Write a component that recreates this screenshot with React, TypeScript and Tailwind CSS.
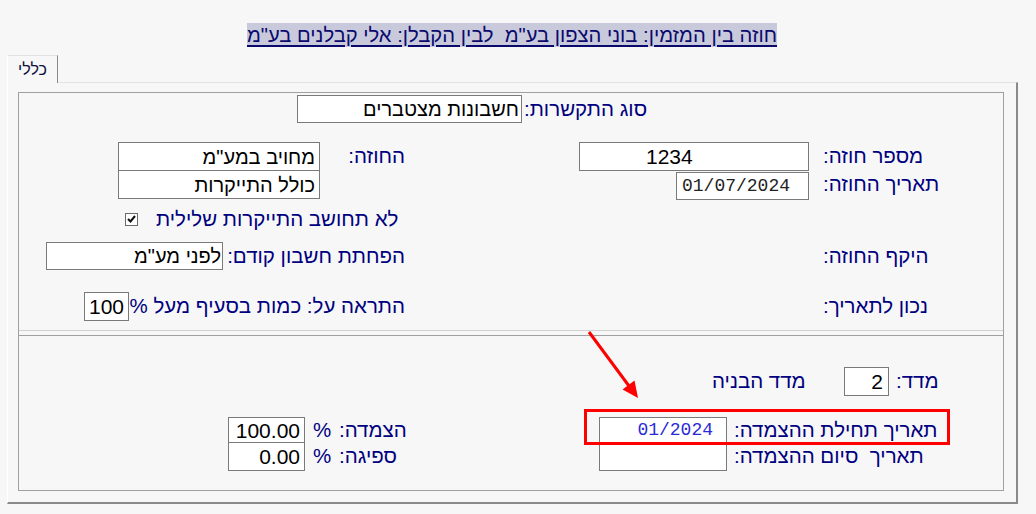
import React from "react";

const LBL = "text-[#000080] text-[20.5px] leading-none whitespace-nowrap";

function Box({ className, children }: { className: string; children?: React.ReactNode }) {
  return (
    <div className={"bg-white border border-[#7a7a7a] flex items-center overflow-hidden shrink-0 " + className}>
      {children}
    </div>
  );
}

function Lbl({ children, className = "" }: { children: React.ReactNode; className?: string }) {
  return (
    <span dir="rtl" className={LBL + " shrink-0 " + className}>
      {children}
    </span>
  );
}

export default function App() {
  return (
    <div className="w-[1036px] h-[514px] bg-[#f7f7f7] overflow-hidden font-['Liberation_Sans',Arial,sans-serif]">
      {/* Title */}
      <div className="flex justify-center w-[1024px] pt-[23px] h-[55px]">
        <span
          dir="rtl"
          className="bg-[#c9c9dc] text-[#0a0a6e] text-[20.2px] leading-[24px] h-[24px] underline underline-offset-[3px] whitespace-pre"
        >
          חוזה בין המזמין: בוני הצפון בע"מ  לבין הקבלן: אלי קבלנים בע"מ
        </span>
      </div>

      {/* Tab strip */}
      <div className="flex pl-[7px] h-[27px]">
        <div className="w-[51px] h-[28px] border-l border-t border-r border-l-[#ffffff] border-t-[#e0e0e0] border-r-[#8a8a8a] bg-[#f7f7f7] flex justify-center pt-[6px] relative z-10">
          <span dir="rtl" className="text-[16px] leading-none text-[#101040]">
            כללי
          </span>
        </div>
      </div>

      {/* Panel */}
      <div className="ml-[7px] w-[1011px] h-[422px] border-t border-l border-t-[#e3e3e3] border-l-[#ffffff] border-r-2 border-b-2 border-r-[#8a8a8a] border-b-[#8a8a8a] pt-[9px] pl-[10px]">
        <div className="relative w-[986px] h-[399px] border border-[#a0a0a0] flex flex-col">
          {/* Row A */}
          <div className="flex items-center h-[28px] mt-[2px]">
            <Box className="ml-[278px] w-[225px] h-[28px] justify-end pr-[2px]">
              <span dir="rtl" className="text-[20px] leading-none text-black">חשבונות מצטברים</span>
            </Box>
            <Lbl className="ml-[2px]">סוג התקשרות:</Lbl>
          </div>

          {/* Row B */}
          <div className="flex items-center h-[29px] mt-[19px]">
            <Box className="ml-[99px] w-[202px] h-[29px] justify-end pr-[4px]">
              <span dir="rtl" className="text-[20px] leading-none text-black">מחויב במע"מ</span>
            </Box>
            <div className="w-[85px] flex justify-end shrink-0">
              <Lbl>החוזה:</Lbl>
            </div>
            <Box className="ml-[174px] w-[230px] h-[29px] pl-[66px]">
              <span className="text-[21px] leading-none text-black">1234</span>
            </Box>
            <Lbl className="ml-[14px]">מספר חוזה:</Lbl>
          </div>

          {/* Row C */}
          <div className="flex items-center h-[29px] -mt-px">
            <Box className="ml-[99px] w-[202px] h-[29px] justify-end pr-[4px]">
              <span dir="rtl" className="text-[20px] leading-none text-black">כולל התייקרות</span>
            </Box>
            <Box className="ml-[356px] w-[133px] h-[28px] self-start mt-[2px] pl-[5px]">
              <span className="font-['Liberation_Mono',monospace] text-[18px] leading-none text-[#222]">01/07/2024</span>
            </Box>
            <Lbl className="ml-[14px]">תאריך החוזה:</Lbl>
          </div>

          {/* Row D */}
          <div className="flex items-center h-[22px] mt-[9px]">
            <div className="ml-[106px] w-[13px] h-[13px] border border-[#6a6a6a] bg-white flex items-center justify-center shrink-0">
              <svg width="9" height="8" viewBox="0 0 9 8">
                <path d="M1 4 L3.5 6.5 L8 1" stroke="#111" strokeWidth="2" fill="none" />
              </svg>
            </div>
            <Lbl className="ml-[18px]">לא תחושב התייקרות שלילית</Lbl>
          </div>

          {/* Row E */}
          <div className="flex items-center h-[28px] mt-[12px]">
            <Box className="ml-[27px] w-[177px] h-[28px] justify-end pr-[1px]">
              <span dir="rtl" className="text-[20px] leading-none text-black">לפני מע"מ</span>
            </Box>
            <div className="w-[182px] flex justify-end shrink-0">
              <Lbl>הפחתת חשבון קודם:</Lbl>
            </div>
            <Lbl className="ml-[418px]">היקף החוזה:</Lbl>
          </div>

          {/* Row F */}
          <div className="flex items-center h-[29px] mt-[22px]">
            <Box className="ml-[65px] w-[45px] h-[29px] justify-end pr-[4px]">
              <span className="text-[21px] leading-none text-black">100</span>
            </Box>
            <div className="w-[276px] flex justify-end shrink-0">
              <Lbl>התראה על: כמות בסעיף מעל %</Lbl>
            </div>
            <Lbl className="ml-[418px]">נכון לתאריך:</Lbl>
          </div>

          {/* Separator */}
          <div className="h-px bg-[#d2d2d2] mt-[9px]" />
          <div className="h-px bg-[#a0a0a0] mt-[4px]" />

          {/* Row G */}
          <div className="flex items-center h-[29px] mt-[31px]">
            <div className="ml-[693px] w-[108px] flex justify-start shrink-0">
              <Lbl>מדד הבניה</Lbl>
            </div>
            <Box className="ml-[24px] w-[45px] h-[29px] justify-end pr-[5px]">
              <span className="text-[21px] leading-none text-black">2</span>
            </Box>
            <Lbl className="ml-[7px]">מדד:</Lbl>
          </div>

          {/* Row H */}
          <div className="flex items-center h-[26px] mt-[21px]">
            <Box className="ml-[209px] w-[77px] h-[26px] justify-end pr-[4px]">
              <span className="text-[21px] leading-none text-black">100.00</span>
            </Box>
            <div className="w-[34px] flex shrink-0">
              <Lbl className="ml-[8px]">%</Lbl>
            </div>
            <div className="w-[100px] flex justify-start shrink-0">
              <Lbl>הצמדה:</Lbl>
            </div>
            <Box className="ml-[160px] w-[128px] h-[26px] justify-end pr-[13px]">
              <span className="font-['Liberation_Mono',monospace] text-[18px] leading-none text-[#2a2ad8]">01/2024</span>
            </Box>
            <Lbl className="ml-[7px]">תאריך תחילת ההצמדה:</Lbl>
          </div>

          {/* Row I */}
          <div className="flex items-center h-[29px] -mt-px">
            <Box className="ml-[209px] w-[77px] h-[29px] justify-end pr-[4px]">
              <span className="text-[21px] leading-none text-black">0.00</span>
            </Box>
            <div className="w-[34px] flex shrink-0">
              <Lbl className="ml-[8px]">%</Lbl>
            </div>
            <div className="w-[100px] flex justify-start shrink-0">
              <Lbl>ספיגה:</Lbl>
            </div>
            <Box className="ml-[160px] w-[128px] h-[29px]" />
            <Lbl className="ml-[7px] whitespace-pre">תאריך  סיום ההצמדה:</Lbl>
          </div>

          {/* Red highlight */}
          <div className="absolute left-[565px] top-[316px] w-[366px] h-[36px] border-[3px] border-[#ff0000] pointer-events-none" />

          {/* Red arrow */}
          <svg className="absolute left-[561px] top-[232px] pointer-events-none" width="80" height="85" viewBox="0 0 80 85">
            <line x1="9" y1="7" x2="49" y2="61" stroke="#ff0000" strokeWidth="3" />
            <polygon points="58,73 42.5,64.5 54.5,55.5" fill="#ff0000" />
          </svg>
        </div>
      </div>
    </div>
  );
}
